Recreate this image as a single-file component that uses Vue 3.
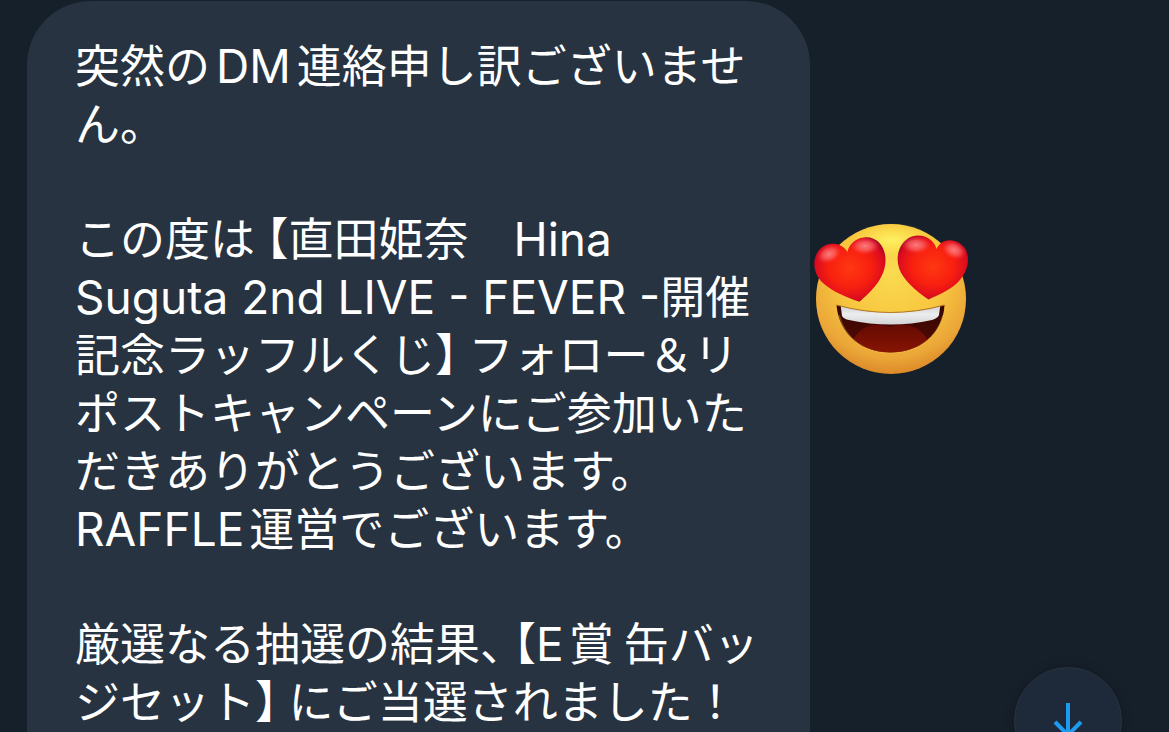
<script setup>
const scrollToLatest = () => {
  window.scrollTo({ top: document.body.scrollHeight, behavior: 'smooth' })
}
</script>

<template>
  <main class="chat">
    <article class="bubble">
      <p>
        突然の<span class="latin word">DM</span>連絡申し訳ございませ<br />
        ん。
      </p>
      <p>
        この度は<span class="open">【</span>直田姫奈　<span class="latin">Hina</span><br />
        <span class="latin">Suguta 2nd LIVE - FEVER -</span>開催<br />
        記念ラッフルくじ<span class="close">】</span>フォロー＆リ<br />
        ポストキャンペーンにご参加いた<br />
        だきありがとうございます。<br />
        <span class="latin lead">RAFFLE</span>運営でございます。
      </p>
      <p>
        厳選なる抽選の結果<span class="comma">、</span><span class="open">【</span><span class="latin lead">E</span>賞&nbsp;缶バッ<br />
        ジセット<span class="close">】</span>にご当選されました！
      </p>
    </article>

    <svg class="reaction" viewBox="0 0 160 160" role="img" aria-label="ハート目の笑顔">
      <defs>
        <radialGradient id="face" cx="50%" cy="32%" r="70%">
          <stop offset="0" stop-color="#fadb50" />
          <stop offset="0.5" stop-color="#f7c63f" />
          <stop offset="0.82" stop-color="#eba638" />
          <stop offset="1" stop-color="#d98426" />
        </radialGradient>
        <radialGradient id="shine" cx="50%" cy="50%" r="50%">
          <stop offset="0" stop-color="#fff568" stop-opacity="0.9" />
          <stop offset="1" stop-color="#fff04d" stop-opacity="0" />
        </radialGradient>
        <radialGradient id="heart" cx="50%" cy="48%" r="60%">
          <stop offset="0" stop-color="#ff3812" />
          <stop offset="0.5" stop-color="#f8200f" />
          <stop offset="0.8" stop-color="#dc0c1e" />
          <stop offset="1" stop-color="#900530" />
        </radialGradient>
        <radialGradient id="gloss" cx="50%" cy="50%" r="50%">
          <stop offset="0" stop-color="#ff8f8f" stop-opacity="0.85" />
          <stop offset="0.5" stop-color="#ff7575" stop-opacity="0.6" />
          <stop offset="1" stop-color="#ff4040" stop-opacity="0" />
        </radialGradient>
        <linearGradient id="teeth" x1="0" y1="0" x2="0" y2="1">
          <stop offset="0" stop-color="#c9cbcf" />
          <stop offset="0.5" stop-color="#eceded" />
          <stop offset="1" stop-color="#d3d3d6" />
        </linearGradient>
        <linearGradient id="mouth" x1="0" y1="0" x2="0" y2="1">
          <stop offset="0" stop-color="#2e0703" />
          <stop offset="1" stop-color="#5d0a02" />
        </linearGradient>
        <linearGradient id="tongue" x1="0" y1="0" x2="0" y2="1">
          <stop offset="0" stop-color="#650a02" />
          <stop offset="1" stop-color="#8e1804" />
        </linearGradient>
        <clipPath id="mouth-shape">
          <path d="M25.500 86Q79.500 101 133.500 86C132 116 108 133.500 79.500 133.500C51 133.500 28 116 25.500 86Z" />
        </clipPath>
      </defs>
      <circle cx="80" cy="80" r="75" fill="url(#face)" />
      <ellipse cx="81" cy="21" rx="40" ry="17" fill="url(#shine)" />
      <g clip-path="url(#mouth-shape)">
        <rect x="20" y="80" width="120" height="60" fill="url(#mouth)" />
        <path d="M42 122C47 108 64 102 79 108C94 102 111 108 117 122L110 140H50Z" fill="url(#tongue)" />
        <path d="M29.500 85L31 97Q33 100 38 101Q80 110 121 101Q127 99 128 96L129.500 85Q80 98 29.500 85Z" fill="url(#teeth)" />
      </g>
      <path d="M25.500 86Q79.500 101 133.500 86" fill="none" stroke="#b77b22" stroke-width="1.200" />
      <path d="M28 96C34 120 54 134 79.500 134C105 134 126 120 132 96" fill="none" stroke="#ffd452" stroke-width="1.200" opacity="0.3" />
      <path d="M48.500 82.700C37 79 22 73 12 64C3 56 1 43 6 34C11 24 25 22 32 28Q35 30 36.500 33C37 27 44 19 53 18.500C66 17 75 28 74.500 42C74 59 61 72 48.500 82.700Z" fill="url(#heart)" />
      <path d="M117.500 80.500C105 72 92 61 88 49C84 36 89 22 101 17.500C112 14 123 20 125.500 30Q126 28 129 25C136 18 150 21 155 31C160 43 155 56 145 65C137 72 127 76 117.500 80.500Z" fill="url(#heart)" />
      <ellipse cx="18" cy="35" rx="13" ry="9" fill="url(#gloss)" transform="rotate(-25 18 35)" />
      <ellipse cx="54" cy="27" rx="15" ry="9" fill="url(#gloss)" />
      <ellipse cx="105" cy="26" rx="15" ry="9" fill="url(#gloss)" />
      <ellipse cx="143" cy="31" rx="13" ry="9" fill="url(#gloss)" transform="rotate(25 143 31)" />
    </svg>

    <button class="jump" type="button" aria-label="最新のメッセージへ移動" @click="scrollToLatest">
      <svg viewBox="0 0 40 40" aria-hidden="true">
        <path d="M20 2V34M7 21L20 34L33 21" />
      </svg>
    </button>
  </main>
</template>

<style>
body {
  margin: 0;
  background: #16202a;
}
</style>

<style scoped>
.chat {
  position: relative;
  display: flex;
  align-items: flex-start;
  box-sizing: border-box;
  height: 100vh;
  padding: 1px 0 0 27px;
  overflow: hidden;
  background: #16202a;
}

.bubble {
  display: flex;
  flex: 0 0 67%;
  flex-direction: column;
  gap: 57px;
  box-sizing: border-box;
  min-width: 783px;
  padding: 34px 48px 112px;
  border-radius: 64px;
  background: #273340;
  color: #fff;
  font-family: "Noto Sans CJK JP", sans-serif;
  font-size: 45px;
  line-height: 58px;
  white-space: nowrap;
}

.bubble p {
  margin: 0;
}

.latin {
  font-family: Inter, "Noto Sans CJK JP", sans-serif;
  font-size: 46px;
  line-height: 1;
}

.word {
  margin: 0 6px;
}

.lead {
  margin-right: 5px;
}

.open,
.close,
.comma {
  font-feature-settings: "halt";
}

.open {
  margin-left: 11px;
}

.close {
  margin-right: 11px;
}

.reaction {
  flex: none;
  width: 160px;
  height: 160px;
  margin: 218px 0 0 1px;
}

.jump {
  position: absolute;
  right: 47px;
  bottom: -43px;
  display: grid;
  place-items: center;
  width: 108px;
  height: 108px;
  padding: 0;
  border: 1px solid #273341;
  border-radius: 50%;
  background: #1e2a39;
  box-shadow: 0 0 12px rgb(0 0 0 / 20%);
  cursor: pointer;
}

.jump svg {
  width: 40px;
  height: 40px;
  fill: none;
  stroke: #1d9bf0;
  stroke-width: 4;
}
</style>
